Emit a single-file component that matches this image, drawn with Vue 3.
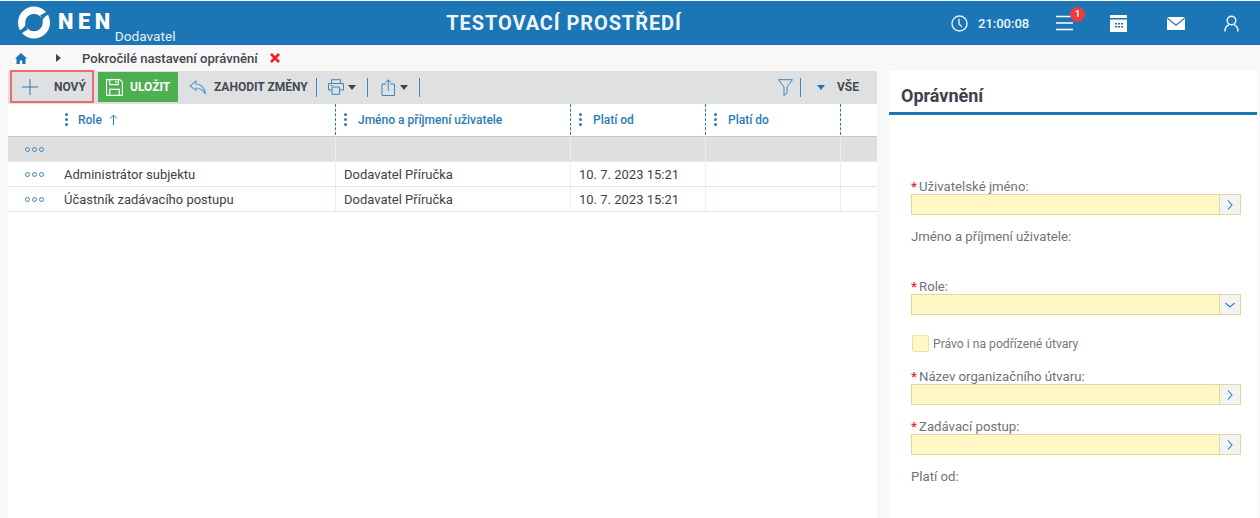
<script setup>
const columns = [
  { label: 'Role', width: 278, sort: true },
  { label: 'Jméno a příjmení uživatele', width: 235 },
  { label: 'Platí od', width: 135 },
  { label: 'Platí do', width: 135 }
]
const rows = [
  ['Administrátor subjektu', 'Dodavatel Příručka', '10. 7. 2023 15:21', ''],
  ['Účastník zadávacího postupu', 'Dodavatel Příručka', '10. 7. 2023 15:21', '']
]
</script>

<template>
  <div class="page">
    <header class="topbar">
      <div class="brand">
        <svg class="logo" width="32" height="33" viewBox="0 0 32 32">
          <circle cx="16" cy="16" r="12.400" fill="none" stroke="#fff" stroke-width="7.200" />
          <path d="M0 24C4 23.500 7 20.500 8 16.500 8.200 19.500 8.800 21.500 9.800 23 7 24.500 4 26.500 2 28Z" fill="#1c75b4" />
          <path d="M0 24C4 23.500 7 20.500 8 16.500 8.200 19.500 8.800 21.500 9.800 23 7 24.500 4 26.500 2 28Z" fill="#1c75b4" transform="rotate(180 16 16)" />
        </svg>
        <span class="nen">NEN</span>
        <span class="dod">Dodavatel</span>
      </div>
      <div class="env">TESTOVACÍ PROSTŘEDÍ</div>
      <div class="tools">
        <svg class="clock" width="17" height="17" viewBox="0 0 18 18" fill="none" stroke="#e3eef6" stroke-width="1.500">
          <circle cx="9" cy="9" r="8" /><path d="M8.500 4v5.500l3 3" />
        </svg>
        <span class="time">21:00:08</span>
        <div class="menu">
          <svg width="17" height="16" viewBox="0 0 17 16" stroke="#fff" stroke-width="1.600"><path d="M0 1.500h17M0 8h17M0 14.500h17" /></svg>
          <span class="badge">1</span>
        </div>
        <svg class="cal" width="17" height="17" viewBox="0 0 17 17">
          <path fill="#fff" d="M0 0h17v3H0zM0 4.500h17V17H0z" />
          <path fill="#1c75b4" d="M5 8h2v1.500H5zM8 8h2v1.500H8zM11 8h2v1.500h-2zM5 11h2v1.500H5zM8 11h2v1.500H8zM11 11h2v1.500h-2z" />
        </svg>
        <svg class="mail" width="18" height="13" viewBox="0 0 18 13">
          <path fill="#fff" d="M0 0h18L9 7.500zM0 1.500 9 9l9-7.500V13H0z" />
        </svg>
        <svg class="user" width="15" height="17" viewBox="0 0 15 17" fill="none" stroke="#fff" stroke-width="1.400">
          <circle cx="7.500" cy="5.500" r="4.300" /><path d="M1 16.500c0-4 2-6 4-6.800M14 16.500c0-4-2-6-4-6.800" />
        </svg>
      </div>
    </header>

    <nav class="crumbs">
      <svg class="home" width="12" height="11" viewBox="0 0 12 11"><path fill="#1c75b4" d="M6 0 0 5.500h1.500V11h3.300V7.500h2.400V11h3.300V5.500H12z" /></svg>
      <span class="caret"></span>
      <span class="crumb">Pokročilé nastavení oprávnění</span>
      <svg class="x" width="10" height="10" viewBox="0 0 10 10" stroke="#ee1c25" stroke-width="2.600"><path d="M1 1l8 8M9 1l-8 8" /></svg>
    </nav>

    <div class="content">
      <main class="left">
        <div class="toolbar">
          <button class="btn new">
            <svg width="16" height="16" viewBox="0 0 16 16" stroke="#2b7cb8" stroke-width="1"><path d="M8 0v16M0 8h16" /></svg>
            <span>NOVÝ</span>
          </button>
          <button class="btn save">
            <svg width="17" height="17" viewBox="0 0 18 18" fill="none" stroke="#fff" stroke-width="1.200">
              <path d="M.6.600h14l2.800 2.800v14H.6zM4 .6v5.400h9V.6M10.500 2v2.500M4 17v-6h10v6" />
            </svg>
            <span>ULOŽIT</span>
          </button>
          <button class="btn discard">
            <svg width="18" height="15" viewBox="0 0 18 15" fill="none" stroke="#5b9ccb" stroke-width="1.100">
              <path d="M7 1 1 6l6 4.500V8c4 0 7 2 9.500 6C16 8 12 4 7 4z" />
            </svg>
            <span>ZAHODIT ZMĚNY</span>
          </button>
          <i class="sep after-discard"></i>
          <button class="btn print">
            <svg width="16" height="16" viewBox="0 0 16 16" fill="none" stroke="#3d87bd" stroke-width="1">
              <path d="M3.500 4V.7h9V4M3.500 11H.5V4.500h15V11H11M4 8h7.500v7.300H4zM2.500 6.500h2" />
            </svg>
            <b class="tri"></b>
          </button>
          <i class="sep after-print"></i>
          <button class="btn share">
            <svg width="15" height="17" viewBox="0 0 15 17" fill="none" stroke="#3d87bd" stroke-width="1">
              <path d="M5 5H1v11.500h12.500V5h-4M7.300 12V1M4.500 3.500 7.300.8l2.800 2.700" />
            </svg>
            <b class="tri"></b>
          </button>
          <i class="sep after-share"></i>
          <div class="spacer"></div>
          <svg class="filter" width="15" height="17" viewBox="0 0 15 17" fill="none" stroke="#3d87bd" stroke-width="1">
            <path d="M.5.700h14L9 8v6l-3 2.500V8z" />
          </svg>
          <i class="sep filter-sep"></i>
          <b class="tri blue"></b>
          <span class="all">VŠE</span>
        </div>

        <div class="thead">
          <div class="gutter"></div>
          <div v-for="c in columns" :key="c.label" class="th" :style="{ width: c.width + 'px' }">
            <span class="dots"><i></i><i></i><i></i></span>
            <span>{{ c.label }}</span>
            <svg v-if="c.sort" class="arrow" width="9" height="11" viewBox="0 0 9 11" fill="none" stroke="#2b7cb8"><path d="M4.500 11V1M1 4.500 4.500 1 8 4.500" /></svg>
          </div>
        </div>

        <div class="row filter-row">
          <div class="gutter"><span class="more"><i></i><i></i><i></i></span></div>
          <div v-for="c in columns" :key="c.label" class="td" :style="{ width: c.width + 'px' }"></div>
        </div>

        <div v-for="(r, i) in rows" :key="i" class="row">
          <div class="gutter"><span class="more"><i></i><i></i><i></i></span></div>
          <div v-for="(cell, j) in r" :key="j" class="td" :class="{ firstcol: j === 0 }" :style="{ width: columns[j].width + 'px' }">{{ cell }}</div>
        </div>
      </main>

      <aside class="panel">
        <h2>Oprávnění</h2>
        <div class="form">
          <label class="lbl req first-f">Uživatelské jméno:</label>
          <div class="field"><span class="addon"><svg width="6" height="10" viewBox="0 0 6 10" fill="none" stroke="#2b7cb8" stroke-width="1.100"><path d="M1 .5l4 4.500-4 4.500" /></svg></span></div>
          <label class="lbl plain">Jméno a příjmení uživatele:</label>
          <label class="lbl req role">Role:</label>
          <div class="field"><span class="addon"><svg width="10" height="6" viewBox="0 0 10 6" fill="none" stroke="#2b7cb8" stroke-width="1.100"><path d="M.5 1l4.500 4 4.500-4" /></svg></span></div>
          <div class="check"><span class="box"></span><span>Právo i na podřízené útvary</span></div>
          <label class="lbl req org">Název organizačního útvaru:</label>
          <div class="field"><span class="addon"><svg width="6" height="10" viewBox="0 0 6 10" fill="none" stroke="#2b7cb8" stroke-width="1.100"><path d="M1 .5l4 4.500-4 4.500" /></svg></span></div>
          <label class="lbl req proc">Zadávací postup:</label>
          <div class="field"><span class="addon"><svg width="6" height="10" viewBox="0 0 6 10" fill="none" stroke="#2b7cb8" stroke-width="1.100"><path d="M1 .5l4 4.500-4 4.500" /></svg></span></div>
          <label class="lbl plain od">Platí od:</label>
        </div>
      </aside>
    </div>
  </div>
</template>

<style>
html, body { margin: 0; background: #f8f8f8; overflow: hidden; }
</style>

<style scoped>
.page { width: 1260px; height: 518px; overflow: hidden; font-family: Roboto, "Liberation Sans", sans-serif; background: #f8f8f8; color: #3a3f47; }
.topbar { height: 44px; margin-top: 1px; background: #1c75b4; display: flex; align-items: center; color: #fff; }
.brand { display: flex; align-items: center; width: 361px; height: 44px; flex: none; }
.logo { margin-left: 18px; margin-top: -2px; flex: none; }
.nen { font-size: 22px; font-weight: 900; letter-spacing: 4.500px; margin-left: 8px; margin-top: -3px; }
.dod { font-size: 13.700px; margin-left: 0; margin-top: 25px; color: #e6f0f7; }
.env { width: 406px; flex: none; text-align: center; font-size: 20px; font-weight: 700; letter-spacing: .9px; color: #eef5fa; }
.tools { flex: 1; display: flex; align-items: center; }
.clock { margin-left: 184px; }
.time { font-size: 13px; font-weight: 500; margin-left: 10px; color: #eef5fa; width: 50px; }
.menu { position: relative; margin-left: 28px; height: 16px; display: flex; }
.badge { position: absolute; left: 14px; top: -8px; width: 15px; height: 15px; border-radius: 50%; background: #ef3b3b; font-size: 9px; font-weight: 700; line-height: 15px; text-align: center; color: #fff; }
.cal { margin-left: 37px; }
.mail { margin-left: 40px; }
.user { margin-left: 39px; }

.crumbs { height: 26px; display: flex; align-items: center; }
.home { margin-left: 15px; }
.caret { width: 0; height: 0; margin-left: 29px; border-left: 5px solid #444; border-top: 4px solid transparent; border-bottom: 4px solid transparent; }
.crumb { margin-left: 21px; font-size: 13.100px; font-weight: 500; color: #44484f; }
.x { margin-left: 12px; }

.content { display: flex; height: 447px; }
.left { width: 869px; margin-left: 8px; background: #fff; flex: none; }
.toolbar { height: 33px; padding-bottom: 1px; box-sizing: border-box; background: #dfe0e2; display: flex; align-items: center; }
.btn { border: 0; background: none; padding: 0; margin: 0; font: inherit; display: flex; align-items: center; color: #454a52; font-size: 12px; font-weight: 700; }
.new { width: 84px; height: 33px; box-sizing: border-box; margin-left: 2px; padding-left: 12px; outline: 2px solid #ec6b6b; outline-offset: -2px; margin-top: -1px; }
.new span { margin-left: 16px; }
.sep { display: block; width: 1px; height: 19px; background: #3d87bd; flex: none; }
.save { width: 80px; height: 30px; margin-left: 4px; background: #4caf50; color: #fff; padding-left: 8px; box-sizing: border-box; }
.save span { margin-left: 7px; }
.discard { margin-left: 11px; }
.discard span { margin-left: 7px; }
.after-discard { margin-left: 8px; }
.print { margin-left: 11px; }
.after-print { margin-left: 11px; }
.share { margin-left: 13px; }
.after-share { margin-left: 11px; }
.tri { display: block; width: 0; height: 0; margin-left: 4px; border-top: 5px solid #444; border-left: 4px solid transparent; border-right: 4px solid transparent; }
.spacer { flex: 1; }
.filter { margin-left: -1px; }
.filter-sep { margin-left: 7px; }
.tri.blue { border-top-color: #1c75b4; margin-left: 16px; }
.all { font-size: 12px; font-weight: 700; margin: 0 18px 0 12px; color: #454a52; }

.thead { display: flex; height: 33px; padding-bottom: 1px; box-sizing: border-box; border-bottom: 1px solid #c9c9c9; }
.gutter { width: 50px; flex: none; display: flex; align-items: center; }
.th { flex: none; box-sizing: border-box; display: flex; align-items: center; font-size: 12px; font-weight: 500; color: #2b7cb8; border-right: 1px dashed #2b7cb8; padding-left: 8px; }
.th:nth-child(2) { padding-left: 7px; }
.dots { display: inline-flex; flex-direction: column; gap: 2px; margin-right: 11px; }
.th:nth-child(2) .dots { margin-right: 10px; }
.dots i { width: 3px; height: 3px; border-radius: 50%; background: #2b7cb8; display: block; }
.arrow { margin-left: 7px; }
.row { display: flex; height: 25px; box-sizing: border-box; border-bottom: 1px solid #dfe8ee; }
.filter-row { background: #dfdfdf; border-bottom: 1px solid #e8e8e8; }
.more { display: inline-flex; gap: 2px; margin-left: 17px; }
.more i { width: 3px; height: 3px; border: 1px solid #3d87bd; border-radius: 50%; display: block; }
.td { flex: none; box-sizing: border-box; font-size: 13px; line-height: 24px; padding: 1px 0 0 8px; border-right: 1px solid #e8eef2; color: #3f4248; white-space: nowrap; }
.firstcol { padding-left: 6px; }

.panel { width: 368px; margin-left: 12px; background: #fff; flex: none; }
h2 { margin: 0; padding: 14px 0 0 12px; box-sizing: border-box; height: 44px; border-bottom: 3px solid #1c75b4; font-size: 18px; font-weight: 700; line-height: 22px; color: #3a434e; }
.form { padding-left: 22px; display: flex; flex-direction: column; }
.lbl { font-size: 13.200px; line-height: 15px; color: #6f7377; display: block; }
.req::before { content: "*"; color: #ee2b2b; margin-right: 2px; font-weight: 700; }
.first-f { margin-top: 64px; }
.field { width: 330px; height: 21px; box-sizing: border-box; background: #fff8c4; border: 1px solid #e2d999; display: flex; justify-content: flex-end; }
.addon { width: 20px; background: #f3f3f3; border-left: 1px solid #e2d999; display: flex; align-items: center; justify-content: center; }
.plain { margin-top: 14px; }
.role { margin-top: 35px; }
.check { display: flex; align-items: center; margin-top: 20px; font-size: 12.150px; color: #75797d; }
.box { width: 15px; height: 15px; background: #fff8c4; border: 1px solid #e9e2ac; border-radius: 2px; margin: 0 4px 0 1px; }
.org { margin-top: 17px; }
.proc { margin-top: 14px; }
.od { margin-top: 14px; }
</style>
